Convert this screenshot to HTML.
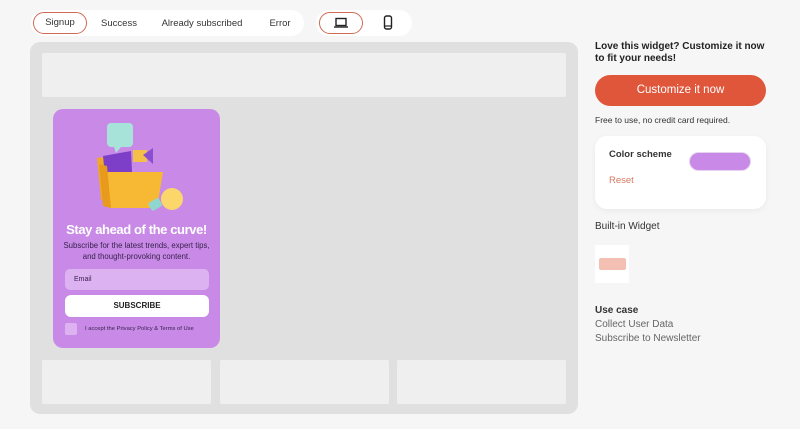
<!DOCTYPE html>
<html><head><meta charset="utf-8"><style>
*{box-sizing:border-box;margin:0;padding:0}
body{width:800px;height:429px;background:#f6f6f6;font-family:"Liberation Sans",sans-serif;position:relative;overflow:hidden;color:#333}
.a{position:absolute}
.pill{background:#fff;border-radius:14px}
.tab{position:absolute;top:12px;height:22px;font-size:9.5px;line-height:23px;text-align:center;color:#333}
.sel{border:1.5px solid #d06a55;border-radius:12px;line-height:20px}
.box{background:#efefef;border-radius:2px}
</style></head><body>
<div class="a pill" style="left:31px;top:10px;width:273px;height:26px"></div>
<div class="tab sel" style="left:33px;width:54px">Signup</div>
<div class="tab" style="left:95px;width:48px">Success</div>
<div class="tab" style="left:158px;width:88px">Already subscribed</div>
<div class="tab" style="left:262px;width:36px">Error</div>
<div class="a pill" style="left:316px;top:10px;width:96px;height:26px"></div>
<div class="tab sel" style="left:319px;width:44px"></div>
<svg class="a" style="left:333px;top:17px" width="16" height="12" viewBox="0 0 16 12"><rect x="3" y="1.5" width="10" height="7" fill="none" stroke="#222" stroke-width="1.4"/><path d="M1 10h14" stroke="#222" stroke-width="1.4"/></svg>
<svg class="a" style="left:383px;top:15px" width="10" height="15" viewBox="0 0 10 15"><rect x="1.5" y="1" width="7" height="13" rx="2" fill="none" stroke="#222" stroke-width="1.4"/><path d="M2 11h6" stroke="#222" stroke-width="1.2"/></svg>

<div class="a" style="left:30px;top:42px;width:548px;height:372px;background:#e0e0e0;border-radius:10px"></div>
<div class="a box" style="left:42px;top:53px;width:524px;height:44px"></div>
<div class="a box" style="left:42px;top:360px;width:169px;height:44px"></div>
<div class="a box" style="left:220px;top:360px;width:169px;height:44px"></div>
<div class="a box" style="left:397px;top:360px;width:169px;height:44px"></div>

<div class="a" style="left:53px;top:109px;width:167px;height:239px;background:#c88ae6;border-radius:10px"></div>
<svg class="a" style="left:85px;top:120px" width="100" height="95" viewBox="0 0 100 95">
<path d="M26 3h18a4 4 0 0 1 4 4v16a4 4 0 0 1-4 4h-8l-5 6-2-6h-3a4 4 0 0 1-4-4V7a4 4 0 0 1 4-4z" fill="#a8e3da"/>
<path d="M48 30h14v12H48z" fill="#f5c04a"/>
<path d="M58 35l10-7v16z" fill="#8a4fd0"/>
<path d="M12 38l26-4 2 44-24 2z" fill="#f0a828"/>
<path d="M18 36l28-5 2 40-26 4z" fill="#7d3fc8"/>
<path d="M18 52h60l-6 36H24z" fill="#f7b934"/>
<path d="M14 44l8 2 4 42-8-2z" fill="#e89a1c"/>
<circle cx="87" cy="79" r="11" fill="#fbd66a"/>
<rect x="64" y="80" width="12" height="9" rx="2" transform="rotate(-30 70 84)" fill="#8fd6cf"/>
</svg>
<div class="a" style="left:53px;top:222px;width:167px;text-align:center;color:#fff;font-weight:bold;font-size:13px;letter-spacing:-0.4px">Stay ahead of the curve!</div>
<div class="a" style="left:62px;top:240px;width:149px;text-align:center;color:#3a2150;font-size:7.8px;line-height:11px">Subscribe for the latest trends, expert tips, and thought-provoking content.</div>
<div class="a" style="left:65px;top:269px;width:144px;height:21px;background:#dcb3f0;border-radius:5px;font-size:7px;line-height:21px;padding-left:9px;color:#3a2150">Email</div>
<div class="a" style="left:65px;top:295px;width:144px;height:22px;background:#fff;border-radius:6px;font-size:8px;font-weight:bold;line-height:22px;text-align:center;color:#222">SUBSCRIBE</div>
<div class="a" style="left:65px;top:323px;width:12px;height:12px;background:#dcb3f0;border-radius:2px"></div>
<div class="a" style="left:85px;top:326px;font-size:5.8px;color:#3a2150">I accept the Privacy Policy &amp; Terms of Use</div>

<div class="a" style="left:595px;top:41px;width:180px;font-size:10px;font-weight:bold;line-height:12px;color:#222">Love this widget? Customize it now to fit your needs!</div>
<div class="a" style="left:595px;top:75px;width:171px;height:31px;background:#e0563b;border-radius:16px;color:#fff;font-size:11.5px;line-height:31px;text-align:center">Customize it now</div>
<div class="a" style="left:595px;top:115px;font-size:8.5px;color:#333">Free to use, no credit card required.</div>
<div class="a" style="left:595px;top:136px;width:171px;height:73px;background:#fff;border-radius:12px;box-shadow:0 2px 6px rgba(0,0,0,.05)"></div>
<div class="a" style="left:609px;top:149px;font-size:9.5px;font-weight:bold;color:#333">Color scheme</div>
<div class="a" style="left:689px;top:152px;width:62px;height:19px;background:#c88ae6;border-radius:10px;border:1px solid #e6d3ef"></div>
<div class="a" style="left:609px;top:175px;font-size:9.5px;color:#d57a62">Reset</div>
<div class="a" style="left:595px;top:221px;font-size:10px;color:#333">Built-in Widget</div>
<div class="a" style="left:595px;top:245px;width:34px;height:38px;background:#fff"></div>
<div class="a" style="left:599px;top:258px;width:27px;height:12px;background:#f3c0b3;border-radius:2px"></div>
<div class="a" style="left:595px;top:305px;font-size:10px;font-weight:bold;color:#333">Use case</div>
<div class="a" style="left:595px;top:318px;font-size:10px;color:#666;line-height:14px">Collect User Data<br>Subscribe to Newsletter</div>
</body></html>
